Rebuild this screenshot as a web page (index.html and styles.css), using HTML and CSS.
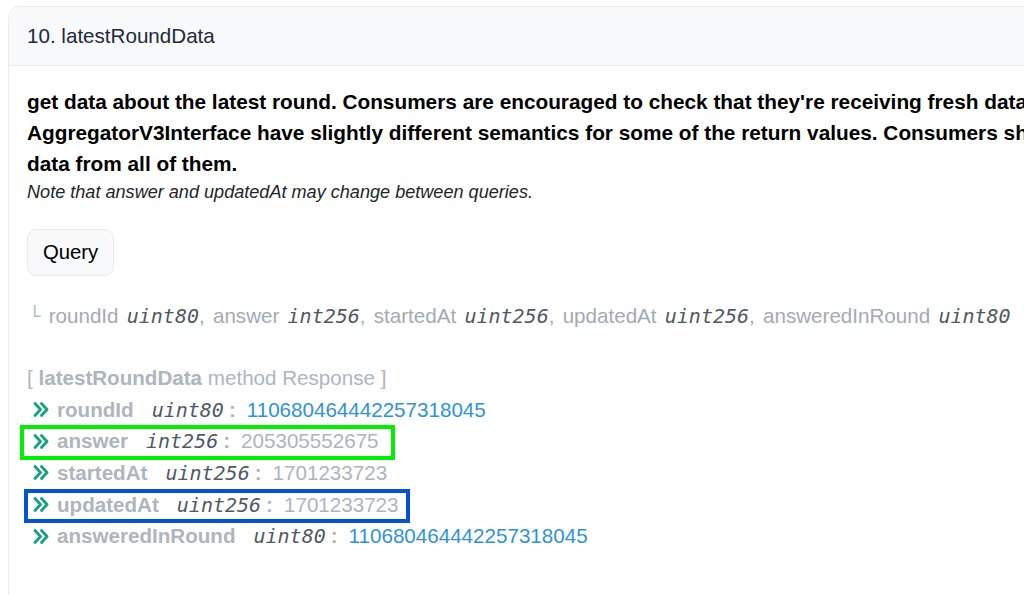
FILE: index.html
```html
<!DOCTYPE html>
<html>
<head>
<meta charset="utf-8">
<link rel="stylesheet" href="styles.css">
</head>
<body>
<div class="card">
  <div class="card-header">10. latestRoundData</div>
  <div class="card-body">
    <div class="desc">
      <span class="line">get data about the latest round. Consumers are encouraged to check that they're receiving fresh data by inspecting the updatedAt and answeredInRound return values.</span>
      <span class="line">AggregatorV3Interface have slightly different semantics for some of the return values. Consumers should determine what implementations they expect to receive</span>
      <span class="line">data from all of them.</span>
    </div>
    <div class="note">Note that answer and updatedAt may change between queries.</div>
    <button class="btn">Query</button>
    <div class="outputs"><span class="corner">└</span> roundId <i class="type">uint80</i>, answer <i class="type">int256</i>, startedAt <i class="type">uint256</i>, updatedAt <i class="type">uint256</i>, answeredInRound <i class="type">uint80</i></div>
    <div class="response">
      <div class="resp-title">[ <b>latestRoundData</b> method Response ]</div>
      <div class="row">
        <svg class="chev" viewBox="0 0 16 15"><polyline points="2,1.5 7.5,7.5 2,13.5"/><polyline points="8.5,1.5 14,7.5 8.5,13.5"/></svg>
        <b class="lbl">roundId</b><i class="type">uint80</i><span class="colon">:</span><span class="val link">110680464442257318045</span>
      </div>
      <div class="row">
        <svg class="chev" viewBox="0 0 16 15"><polyline points="2,1.5 7.5,7.5 2,13.5"/><polyline points="8.5,1.5 14,7.5 8.5,13.5"/></svg>
        <b class="lbl">answer</b><i class="type">int256</i><span class="colon">:</span><span class="val">205305552675</span>
        <div class="mark mark-green"></div>
      </div>
      <div class="row">
        <svg class="chev" viewBox="0 0 16 15"><polyline points="2,1.5 7.5,7.5 2,13.5"/><polyline points="8.5,1.5 14,7.5 8.5,13.5"/></svg>
        <b class="lbl">startedAt</b><i class="type">uint256</i><span class="colon">:</span><span class="val">1701233723</span>
      </div>
      <div class="row">
        <svg class="chev" viewBox="0 0 16 15"><polyline points="2,1.5 7.5,7.5 2,13.5"/><polyline points="8.5,1.5 14,7.5 8.5,13.5"/></svg>
        <b class="lbl">updatedAt</b><i class="type">uint256</i><span class="colon">:</span><span class="val">1701233723</span>
        <div class="mark mark-blue"></div>
      </div>
      <div class="row">
        <svg class="chev" viewBox="0 0 16 15"><polyline points="2,1.5 7.5,7.5 2,13.5"/><polyline points="8.5,1.5 14,7.5 8.5,13.5"/></svg>
        <b class="lbl">answeredInRound</b><i class="type">uint80</i><span class="colon">:</span><span class="val link">110680464442257318045</span>
      </div>
    </div>
  </div>
</div>
</body>
</html>
```

FILE: styles.css
```css
html, body {
  margin: 0;
  padding: 0;
  background: #ffffff;
  overflow: hidden;
  height: 595px;
}
body {
  font-family: "Liberation Sans", Arial, sans-serif;
  font-size: 20.6px;
  color: #212529;
}
.card {
  margin: 6px 0 0 8px;
  width: 1300px;
  min-height: 800px;
  border: 1px solid #e9ecef;
  border-radius: 12px;
  box-sizing: border-box;
}
.card-header {
  height: 58px;
  line-height: 58px;
  padding-left: 18px;
  background: #f8f9fa;
  border-bottom: 1px solid #e9ecef;
  border-radius: 12px 12px 0 0;
  color: #1e2a3a;
}
.card-body {
  padding: 20px 18px;
}
.desc {
  font-weight: bold;
  font-size: 20.8px;
  line-height: 31px;
  color: #000000;
}
.line {
  display: block;
  white-space: nowrap;
}
.note {
  font-style: italic;
  font-size: 18.1px;
  line-height: 27px;
  color: #212529;
}
.btn {
  display: block;
  margin-top: 23px;
  height: 47px;
  padding: 0 15px;
  font-family: "Liberation Sans", Arial, sans-serif;
  font-size: 20.3px;
  color: #000000;
  background: #f8f9fa;
  border: 1px solid #e9ecef;
  border-radius: 9px;
}
.outputs {
  margin-top: 24px;
  line-height: 31px;
  color: #a3aab3;
  white-space: nowrap;
  word-spacing: 2.5px;
}
.corner {
  font-family: "DejaVu Sans", sans-serif;
  font-size: 19px;
  color: #b4bac2;
  margin-left: 2px;
}
.type {
  font-family: "DejaVu Sans Mono", monospace;
  font-size: 20px;
  font-style: italic;
  color: #4f5963;
  word-spacing: 0;
}
.response {
  margin-top: 30px;
  color: #adb5bd;
}
.resp-title {
  line-height: 31.7px;
}
.row {
  position: relative;
  display: flex;
  align-items: center;
  height: 31.7px;
  white-space: nowrap;
}
.chev {
  width: 16px;
  height: 15px;
  margin-left: 6px;
  margin-right: 8px;
  fill: none;
  stroke: #13a085;
  stroke-width: 2.8;
  stroke-linecap: round;
  stroke-linejoin: round;
}
.lbl {
  margin-right: 18px;
  color: #adb5bd;
}
.row .type {
  margin-right: 5px;
}
.colon {
  margin-right: 11px;
  font-weight: bold;
  color: #adb5bd;
}
.val {
  color: #adb5bd;
}
.val.link {
  color: #2f93d8;
}
.mark {
  position: absolute;
  top: 0;
  box-sizing: border-box;
  border-width: 4px;
  border-style: solid;
}
.mark-green {
  left: -7px;
  width: 375px;
  height: 35px;
  border-color: #00f000;
}
.mark-blue {
  left: -3px;
  width: 386px;
  height: 34px;
  border-color: #0352d5;
}
```
